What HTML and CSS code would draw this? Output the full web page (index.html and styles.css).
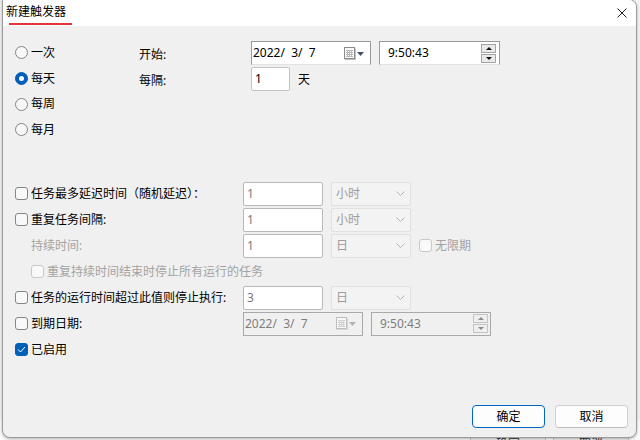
FILE: index.html
```html
<!DOCTYPE html>
<html lang="zh-CN">
<head>
<meta charset="utf-8">
<title>新建触发器</title>
<link rel="stylesheet" href="styles.css">
</head>
<body>
<div class="backwin">
  <span class="bw-btn bw-ok">确定</span>
  <span class="bw-btn bw-cancel">取消</span>
</div>
<div class="window">
  <div class="titlebar">
    <span class="title">新建触发器</span>
    <span class="close"><svg width="10" height="10" viewBox="0 0 10 10"><path d="M0.5 0.5L9.5 9.5M9.5 0.5L0.5 9.5" stroke="#1b1b1b" stroke-width="1"/></svg></span>
  </div>
  <div class="content">
    <div class="schedule">
      <div class="radios">
        <div class="radio-row"><span class="radio"></span><span>一次</span></div>
        <div class="radio-row"><span class="radio on"></span><span>每天</span></div>
        <div class="radio-row"><span class="radio"></span><span>每周</span></div>
        <div class="radio-row"><span class="radio"></span><span>每月</span></div>
      </div>
      <div class="start-grid">
        <span class="lbl">开始:</span>
        <div class="pair">
          <div class="datebox"><span class="val">2022/  3/  7</span><span class="cal"><svg width="21" height="13" viewBox="0 0 21 13"><rect x="0.5" y="0.5" width="10" height="11" fill="#fafafa" stroke="#8a8a8a"/><path d="M0.5 12.5H11.5V1.5" fill="none" stroke="#c0c0c0"/><path d="M2 3.5H9M2 5.5H9M2 7.5H9M2 9.5H9M3.5 3V10M5.5 3V10M7.5 3V10" stroke="#b8b8b8" stroke-width="1"/><path d="M13 5H20L16.5 9Z" fill="#44506c"/></svg></span></div>
          <div class="timebox"><span class="val">9:50:43</span><span class="spin"><span class="sb"><span class="tri-up"></span></span><span class="sb"><span class="tri-down"></span></span></span></div>
        </div>
        <span class="lbl">每隔:</span>
        <div class="pair"><div class="input-small">1</div><span class="unit">天</span></div>
      </div>
    </div>

    <div class="advanced">
      <div class="row">
        <div class="lead"><span class="cb"></span><span>任务最多延迟时间（随机延迟）：</span></div>
        <div class="field">1</div>
        <div class="select"><span>小时</span><svg width="9" height="5" viewBox="0 0 9 5"><path d="M0.5 0.5L4.5 4.5L8.5 0.5" fill="none" stroke="#b5b5b5"/></svg></div>
      </div>
      <div class="row">
        <div class="lead"><span class="cb"></span><span>重复任务间隔:</span></div>
        <div class="field">1</div>
        <div class="select"><span>小时</span><svg width="9" height="5" viewBox="0 0 9 5"><path d="M0.5 0.5L4.5 4.5L8.5 0.5" fill="none" stroke="#b5b5b5"/></svg></div>
      </div>
      <div class="row">
        <div class="lead indent dis-text"><span>持续时间:</span></div>
        <div class="field">1</div>
        <div class="select"><span>日</span><svg width="9" height="5" viewBox="0 0 9 5"><path d="M0.5 0.5L4.5 4.5L8.5 0.5" fill="none" stroke="#b5b5b5"/></svg></div>
        <div class="inline-check dis-text"><span class="cb dis"></span><span>无限期</span></div>
      </div>
      <div class="row">
        <div class="lead indent wide dis-text"><span class="cb dis"></span><span>重复持续时间结束时停止所有运行的任务</span></div>
      </div>
      <div class="row">
        <div class="lead"><span class="cb"></span><span>任务的运行时间超过此值则停止执行:</span></div>
        <div class="field">3</div>
        <div class="select"><span>日</span><svg width="9" height="5" viewBox="0 0 9 5"><path d="M0.5 0.5L4.5 4.5L8.5 0.5" fill="none" stroke="#b5b5b5"/></svg></div>
      </div>
      <div class="row">
        <div class="lead"><span class="cb"></span><span>到期日期:</span></div>
        <div class="pair">
          <div class="datebox dis"><span class="val">2022/  3/  7</span><span class="cal"><svg width="21" height="13" viewBox="0 0 21 13"><rect x="0.5" y="0.5" width="10" height="11" fill="#f7f7f7" stroke="#bdbdbd"/><path d="M0.5 12.5H11.5V1.5" fill="none" stroke="#d6d6d6"/><path d="M2 3.5H9M2 5.5H9M2 7.5H9M2 9.5H9M3.5 3V10M5.5 3V10M7.5 3V10" stroke="#d2d2d2" stroke-width="1"/><path d="M13 5H20L16.5 9Z" fill="#b3b3b3"/></svg></span></div>
          <div class="timebox dis"><span class="val">9:50:43</span><span class="spin"><span class="sb"><span class="tri-up"></span></span><span class="sb"><span class="tri-down"></span></span></span></div>
        </div>
      </div>
      <div class="row">
        <div class="lead"><span class="cb on"><svg width="9" height="7" viewBox="0 0 9 7"><path d="M1 3.5L3.5 6L8 1" fill="none" stroke="#ffffff" stroke-width="1"/></svg></span><span>已启用</span></div>
      </div>
    </div>

    <div class="footer">
      <button class="btn primary">确定</button>
      <button class="btn">取消</button>
    </div>
  </div>
</div>
</body>
</html>
```

FILE: styles.css
```css
html, body {
  margin: 0;
  padding: 0;
}

body {
  width: 640px;
  height: 440px;
  overflow: hidden;
  position: relative;
  background: #f4f4f4;
  font-family: "Noto Sans", "Noto Sans CJK SC", sans-serif;
  font-size: 12px;
  line-height: 16px;
  color: #000;
}

/* window behind the dialog (only its top edge peeks out) */
.backwin {
  position: absolute;
  left: 0;
  top: 420px;
  width: 640px;
  height: 40px;
  background: #fbfbfb;
}

.bw-btn {
  position: absolute;
  top: 14px;
  width: 76px;
  height: 26px;
  box-sizing: border-box;
  border-left: 1px solid #c8c8c8;
  border-right: 1px solid #c8c8c8;
  background: #f0f0f0;
  text-align: center;
  line-height: 20px;
  color: #333;
}

.bw-ok { left: 470px; }
.bw-cancel { left: 553px; }

/* dialog window */
.window {
  position: absolute;
  left: 2px;
  top: -1px;
  width: 635px;
  height: 439px;
  box-sizing: border-box;
  border: 1px solid #9c9c9c;
  border-radius: 0 8px 8px 8px;
  background: #f0f0f0;
  display: flex;
  flex-direction: column;
  overflow: hidden;
  box-shadow: 0 1px 3px rgba(0, 0, 0, 0.3);
}

.titlebar {
  flex: none;
  height: 26px;
  box-sizing: border-box;
  padding: 0 0 2px 3px;
  background: #fff;
  display: flex;
  align-items: center;
  justify-content: space-between;
  position: relative;
}

.title {
  color: #000;
}

.title::after {
  content: "";
  position: absolute;
  left: 6px;
  top: 23px;
  width: 63px;
  height: 2px;
  background: #e8333b;
}

.close {
  display: flex;
  margin-right: 9px;
  margin-top: 2px;
}

.content {
  flex: 1;
  display: flex;
  flex-direction: column;
  padding: 0 8px 9px 12px;
}

/* schedule section */
.schedule {
  display: flex;
  padding-top: 14px;
}

.radios {
  width: 124px;
  flex: none;
  display: flex;
  flex-direction: column;
}

.radio-row {
  height: 25.7px;
  display: flex;
  align-items: center;
  gap: 3px;
}

.radio {
  width: 13px;
  height: 13px;
  box-sizing: border-box;
  border: 1px solid #858585;
  border-radius: 50%;
  background: #f8f8f8;
  display: flex;
  align-items: center;
  justify-content: center;
}

.radio.on {
  background: #005fb8;
  border-color: #005fb8;
}

.radio.on::after {
  content: "";
  width: 5px;
  height: 5px;
  border-radius: 50%;
  background: #fff;
}

.start-grid {
  display: grid;
  grid-template-columns: 112px auto;
  grid-auto-rows: 24px;
  row-gap: 2px;
  margin-top: 1px;
  align-items: center;
}

.lbl {
  padding-top: 4px;
}

.pair {
  display: flex;
  align-items: center;
  gap: 8px;
}

.datebox {
  width: 120px;
  height: 24px;
  box-sizing: border-box;
  border: 1px solid #9a9a9a;
  border-bottom-color: #e2e2e2;
  background: #fff;
  display: flex;
  align-items: center;
  justify-content: space-between;
  padding: 0 5px 0 1px;
}

.val {
  white-space: pre;
}

.cal {
  display: flex;
}

.timebox {
  width: 121px;
  height: 24px;
  box-sizing: border-box;
  border: 1px solid #9a9a9a;
  border-bottom-color: #e2e2e2;
  background: #fff;
  display: flex;
  align-items: center;
  justify-content: space-between;
  padding: 0 3px 0 8px;
}

.spin {
  display: flex;
  flex-direction: column;
  gap: 1px;
}

.sb {
  width: 15px;
  height: 9px;
  box-sizing: border-box;
  border: 1px solid #a3a3a3;
  background: #e9e9e9;
  display: flex;
  align-items: center;
  justify-content: center;
}

.tri-up {
  width: 0;
  height: 0;
  border-left: 3px solid transparent;
  border-right: 3px solid transparent;
  border-bottom: 3px solid #111;
}

.tri-down {
  width: 0;
  height: 0;
  border-left: 3px solid transparent;
  border-right: 3px solid transparent;
  border-top: 3px solid #111;
}

.datebox.dis,
.timebox.dis {
  background: #f0f0f0;
  border-color: #a9a9a9;
  color: #7d7d7d;
}

.timebox.dis {
  width: 120px;
  padding-right: 2px;
}

.timebox.dis .sb {
  border-color: #c4c4c4;
  background: #efefef;
}

.timebox.dis .tri-up { border-bottom-color: #8a8a8a; }
.timebox.dis .tri-down { border-top-color: #8a8a8a; }

.input-small {
  width: 39px;
  height: 24px;
  box-sizing: border-box;
  border: 1px solid #c4c4c4;
  border-radius: 2px;
  background: #fff;
  padding-left: 3px;
  display: flex;
  align-items: center;
}

.unit {
  padding-top: 2px;
}

/* advanced section */
.advanced {
  margin-top: 39px;
  display: flex;
  flex-direction: column;
}

.row {
  height: 24px;
  margin-bottom: 2px;
  display: flex;
  align-items: center;
  gap: 8px;
}

.lead {
  width: 228px;
  flex: none;
  display: flex;
  align-items: center;
  gap: 3px;
  margin-right: -8px;
  white-space: nowrap;
}

.lead.indent {
  box-sizing: border-box;
  padding-left: 16px;
}

.lead.wide {
  width: 400px;
}

.dis-text {
  color: #a3a3a3;
}

.cb {
  flex: none;
  width: 13px;
  height: 13px;
  box-sizing: border-box;
  border: 1px solid #858585;
  border-radius: 3px;
  background: #f8f8f8;
  display: flex;
  align-items: center;
  justify-content: center;
}

.cb.dis {
  border-color: #c8c8c8;
  background: #f9f9f9;
}

.cb.on {
  background: #005fb8;
  border-color: #005fb8;
}

.field {
  width: 80px;
  height: 24px;
  box-sizing: border-box;
  border: 1px solid #b8b8b8;
  border-radius: 2px;
  background: #fff;
  color: #7a7a7a;
  padding-left: 3px;
  display: flex;
  align-items: center;
}

.select {
  width: 80px;
  height: 24px;
  box-sizing: border-box;
  border: 1px solid #e0e0e0;
  border-radius: 2px;
  background: #f3f3f3;
  color: #9c9c9c;
  padding: 0 5px 0 4px;
  display: flex;
  align-items: center;
  justify-content: space-between;
}

.inline-check {
  display: flex;
  align-items: center;
  gap: 3px;
}

/* footer buttons */
.footer {
  margin-top: auto;
  display: flex;
  justify-content: flex-end;
  gap: 10px;
}

.btn {
  width: 73px;
  height: 23px;
  box-sizing: border-box;
  border: 1px solid #d0d0d0;
  border-bottom-color: #bdbdbd;
  border-radius: 4px;
  background: #fdfdfd;
  font-family: inherit;
  font-size: 12px;
  line-height: 16px;
  color: #000;
  padding: 0;
}

.btn.primary {
  border: 1px solid #0067c0;
}
```
